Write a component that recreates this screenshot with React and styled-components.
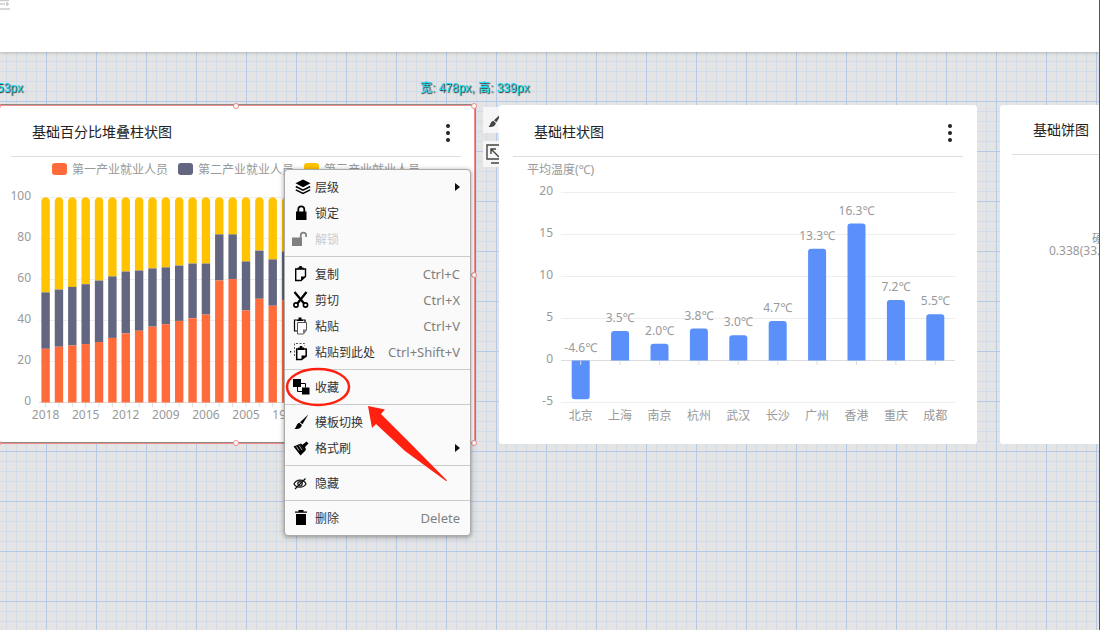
import React from 'react';
import styled, { createGlobalStyle } from 'styled-components';

const GlobalStyle = createGlobalStyle`
    * {
        box-sizing: border-box;
    }
    body {
        margin: 0;
        font-family: 'Noto Sans', 'Noto Sans CJK SC', sans-serif;
        font-size: 12px;
        color: #333333;
    }
    button {
        font-family: inherit;
    }
`

const Page = styled.div`
    display: flex;
    flex-direction: column;
    min-height: 100vh;
    overflow: hidden;
    border-right: 1px solid #555555;
`

const TopBar = styled.header`
    height: 52px;
    background: #ffffff;
    box-shadow: 0 1px 3px rgba(0, 0, 0, 0.2);
    z-index: 1;
`

const Canvas = styled.main`
    position: relative;
    flex: 1;
    overflow: hidden;
    background-color: #e4e4e4;
    background-image:
        linear-gradient(90deg, #b4cae6 1px, transparent 1px),
        linear-gradient(#b4cae6 1px, transparent 1px),
        linear-gradient(90deg, #d2dbe9 1px, transparent 1px),
        linear-gradient(#d2dbe9 1px, transparent 1px);
    background-size: 50px 50px, 50px 50px, 10px 10px, 10px 10px;
    background-position: 46px 49px, 46px 49px, 6px 9px, 6px 9px;
`

const SizeTag = styled.span`
    position: absolute;
    top: 27px;
    left: ${props => props.$x}px;
    line-height: 18px;
    white-space: nowrap;
    font-family: 'Liberation Sans', 'Noto Sans CJK SC', sans-serif;
    color: #10dcf0;
    text-shadow: 1px 1px 1px #222222;
`

const Card = styled.section`
    position: absolute;
    top: 53px;
    left: ${props => props.$x}px;
    width: 478px;
    height: 339px;
    border-radius: 3px;
    background: #ffffff;
`

const CardHeader = styled.div`
    display: flex;
    align-items: center;
    justify-content: space-between;
    height: ${props => props.$compact ? 50 : 52}px;
    margin: 0 ${props => props.$compact ? 12 : 14}px;
    padding: ${props => props.$compact ? 0 : 2}px 3px 0 21px;
    border-bottom: 1px solid #dddddd;
`

const CardTitle = styled.h2`
    margin: 0;
    font-size: 14px;
    font-weight: 400;
    line-height: 20px;
    color: #222222;
`

const MoreButton = styled.button`
    display: flex;
    padding: 2px 0 0;
    border: 0;
    background: none;
`

const Legend = styled.div`
    display: flex;
    align-items: center;
    gap: 10px;
    height: 24px;
    padding-left: 55px;
`

const LegendItem = styled.span`
    display: flex;
    align-items: center;
    gap: 5px;
    white-space: nowrap;
    color: #999999;

    &::before {
        content: '';
        width: 15px;
        height: 12px;
        border-radius: 3px;
        background: ${props => props.$color};
    }
`

const AxisName = styled.div`
    height: 24px;
    padding-left: 28px;
    line-height: 26px;
    color: #999999;
`

const Chart = styled.svg`
    display: block;
    width: 100%;

    text {
        font-size: 12px;
        fill: #999999;
    }
`

const PieLabel = styled.p`
    margin: 78px 0 0 49px;
    line-height: 12px;
    text-indent: 43px;
    color: #999999;
`

const Selection = styled.div`
    position: absolute;
    inset: 0;
    border: 1px solid #f58a86;
    box-shadow: 1px -1px 0 #8a8a8a, inset 0 -1px 0 #8a8a8a;
`

const Handle = styled.i`
    position: absolute;
    left: ${props => props.$x};
    top: ${props => props.$y};
    width: 6px;
    height: 6px;
    margin: -3px;
    border: 1px solid #f58a86;
    border-radius: 50%;
    background: #ffffff;
`

const SideTools = styled.div`
    position: absolute;
    top: 55px;
    left: 483px;
    display: flex;
    flex-direction: column;
    gap: 8px;
`

const SideButton = styled.button`
    display: flex;
    width: 26px;
    height: 26px;
    padding: 3px;
    border: 0;
    background: #f6f6f6;
`

const Menu = styled.div`
    position: absolute;
    top: 117px;
    left: 284px;
    width: 187px;
    border: 1px solid #aaaaaa;
    border-radius: 4px;
    background: #fafafa;
    box-shadow: 0 1px 5px rgba(0, 0, 0, 0.4);
`

const MenuGroup = styled.div`
    padding: 4px 0;

    & + & {
        border-top: 1px solid #cccccc;
    }
`

const MenuItem = styled.button`
    display: flex;
    align-items: center;
    width: 100%;
    height: 26px;
    padding: 0 10px 0 7px;
    border: 0;
    background: none;
    font-size: 12px;
    color: #333333;

    &:disabled {
        color: #cccccc;
    }
`

const MenuIcon = styled.svg`
    width: 20px;
    height: 20px;
    margin-right: 3px;
    overflow: visible;
`

const Shortcut = styled.span`
    margin-left: auto;
    font-size: 13px;
    color: #808080;
`

const Arrow = styled.span`
    margin-left: auto;
    border: 4px solid transparent;
    border-left: 5px solid #111111;
    border-right: 0;
`

const Annotation = styled.svg`
    position: absolute;
    top: 310px;
    left: 284px;
    pointer-events: none;
`

const icons = {
    layers: (
        <>
            <path d="M11 2.500l7.500 3.800L11 10.200 3.500 6.300z" />
            <path d="M3.800 9.500l7.200 3.600 7.200-3.600M3.800 12.800l7.200 3.600 7.200-3.600" fill="none" stroke="#000" strokeWidth="1.500" />
        </>
    ),
    lock: (
        <>
            <path d="M4 8.500h10.500V17H4z" />
            <path d="M6.300 9V6.300a3 3 0 0 1 6 0V9" fill="none" stroke="#000" strokeWidth="1.800" />
        </>
    ),
    unlock: (
        <g fill="#808080">
            <path d="M0 8.500h10V17H0z" />
            <path d="M8.700 9V6.300a2.700 2.700 0 0 1 5.400 0V8" fill="none" stroke="#808080" strokeWidth="1.700" />
        </g>
    ),
    copy: (
        <>
            <path d="M6 5H3.700v11.500H9l4.500-4V5H11" fill="none" stroke="#000" strokeWidth="1.400" />
            <path d="M5.500 3.500h1.800V2h2.500v1.500h1.800v2.200H5.500zM9 17v-4.500h5z" />
        </>
    ),
    cut: (
        <g fill="none" stroke="#000">
            <path d="M2.500 2L12.500 14M14.500 2L5 14" strokeWidth="2.300" />
            <circle cx="4" cy="15" r="2.100" strokeWidth="1.600" />
            <circle cx="13.500" cy="15" r="2.100" strokeWidth="1.600" />
        </g>
    ),
    paste: (
        <>
            <path d="M5 15H2.500V4H5M10.500 4H13v2" fill="none" stroke="#000" strokeWidth="1.200" />
            <path d="M5 3.500h1.500V1.500h3v2H11V5H5z" />
            <path d="M5.500 6.500h9v7.500L11.500 18H5.500z" fill="#fff" stroke="#555" />
            <path d="M11 18v-4.500h3.500z" fill="#777" />
        </>
    ),
    pasteHere: (
        <>
            <path d="M2.500 14V1.500h10V4" fill="none" stroke="#555" strokeDasharray="2 1.500" />
            <path d="M-2 9h1.200v1.500H-2z" />
            <path d="M6.500 7H4.700v10.500H9.500l4.700-3.500V7H12" fill="none" stroke="#000" strokeWidth="1.500" />
            <path d="M6 5.500h1.800V4h2.500v1.500h1.800V8H6zM9.500 18v-4.500h5z" />
        </>
    ),
    favorite: (
        <>
            <path d="M1 2h8v8H1zM10 10.500h7.500V17.500H10z" />
            <path d="M9 6.500h4.500v4M5.500 10v4.500H10" fill="none" stroke="#000" />
        </>
    ),
    brush: (
        <>
            <path d="M16.300 2.500L10.500 12.300 8 10.200z" />
            <path d="M7.300 10.800l2.600 2.300c-.5 3.200-4.200 4.600-7.400 3.600 2-.8 1.500-4.800 4.800-5.900z" />
        </>
    ),
    format: (
        <>
            <path d="M1.500 8.500L7.500 6l6 6.500L8.500 17.500z" />
            <path d="M8.500 5.200l2 1.600 4-3.400 2 2.200-3.500 3.400 1 2.600-1 .8-5-6z" />
            <path d="M4.500 8.500l2.500 4M7 7.500l3 4.500" stroke="#fafafa" strokeWidth=".7" />
        </>
    ),
    hide: (
        <g fill="none" stroke="#111" strokeWidth="1.200">
            <path d="M2 11c2-5 10-5.500 12 0-2.500 4.200-10 4.200-12 0z" />
            <circle cx="8" cy="10.800" r="2.200" />
            <path d="M3 16L13.500 5.500" />
        </g>
    ),
    trash: <path d="M4 6h10v11H4zM3 3.500h3.500V2h5v1.500H15v1.300H3z" />,
};

const menu = [
    [
        { label: '层级', icon: 'layers', sub: true },
        { label: '锁定', icon: 'lock' },
        { label: '解锁', icon: 'unlock', disabled: true },
    ],
    [
        { label: '复制', icon: 'copy', keys: 'Ctrl+C' },
        { label: '剪切', icon: 'cut', keys: 'Ctrl+X' },
        { label: '粘贴', icon: 'paste', keys: 'Ctrl+V' },
        { label: '粘贴到此处', icon: 'pasteHere', keys: 'Ctrl+Shift+V' },
    ],
    [{ label: '收藏', icon: 'favorite' }],
    [
        { label: '模板切换', icon: 'brush' },
        { label: '格式刷', icon: 'format', sub: true },
    ],
    [{ label: '隐藏', icon: 'hide' }],
    [{ label: '删除', icon: 'trash', keys: 'Delete' }],
];

// [first industry, first + second industry], the third fills up to 100
const shares = [
    [26.2, 53.7], [27.2, 55.1], [27.8, 56.4], [28.5, 57.7], [29.5, 59.5],
    [31.5, 61.5], [33.7, 63.9], [35, 64.4], [37, 65.4], [38.2, 65.9],
    [39.8, 66.8], [41.1, 67.8], [42.9, 67.8], [59.5, 82], [60.2, 82],
    [44.9, 68.8], [50.6, 74.1], [47.2, 69.8], [49.8, 73.7],
];
const years = ['2018', '2015', '2012', '2009', '2006', '2005', '1999'];

const temps = [
    ['北京', -4.6], ['上海', 3.5], ['南京', 2.0], ['杭州', 3.8], ['武汉', 3.0],
    ['长沙', 4.7], ['广州', 13.3], ['香港', 16.3], ['重庆', 7.2], ['成都', 5.5],
];

const MoreIcon = () => (
    <MoreButton aria-label="更多">
        <svg width="20" height="20">
            <circle cx="10" cy="3" r="2" fill="#222" />
            <circle cx="10" cy="10" r="2" fill="#222" />
            <circle cx="10" cy="17" r="2" fill="#222" />
        </svg>
    </MoreButton>
)

const StackedChart = () => {
    const y = value => 221.5 - value * 2.05;
    const x = index => 48.6 + index * 13.36;
    return (
        <Chart viewBox="0 0 478 263">
            {[0, 20, 40, 60, 80, 100].map(value => (
                <g key={value}>
                    <line x1="42" x2="450" y1={Math.floor(y(value)) + 0.5} y2={Math.floor(y(value)) + 0.5} stroke={value ? '#eeeeee' : '#dddddd'} />
                    <text x="34" y={y(value) + 2} textAnchor="end">{value}</text>
                </g>
            ))}
            {shares.map(([first, second], i) => (
                <g key={i}>
                    <path d={`M${x(i) - 4.2} ${y(second)}V20.500a4.200 4.200 0 0 1 8.400 0V${y(second)}z`} fill="#ffc300" />
                    <rect x={x(i) - 4.2} y={y(second)} width="8.400" height={y(first) - y(second)} fill="#626681" />
                    <rect x={x(i) - 4.2} y={y(first)} width="8.400" height={y(0) - y(first)} fill="#ff6b3b" />
                    <line x1={x(i)} x2={x(i)} y1="222" y2="226" stroke="#dddddd" />
                </g>
            ))}
            {years.map((year, i) => (
                <text key={year} x={x(i * 3)} y="238" textAnchor="middle">{year}</text>
            ))}
        </Chart>
    );
}

const TemperatureChart = () => {
    const y = value => 179.5 - value * 8.4;
    const x = index => 81.7 + index * 39.4;
    return (
        <Chart viewBox="0 0 478 263">
            {[20, 15, 10, 5, 0, -5].map(value => (
                <g key={value}>
                    <line x1="62" x2="456" y1={y(value)} y2={y(value)} stroke={value ? '#eeeeee' : '#dddddd'} />
                    <text x="54" y={y(value) + 2} textAnchor="end">{value}</text>
                </g>
            ))}
            {temps.map(([city, value], i) => {
                const top = Math.min(y(value), y(0));
                const h = Math.abs(value) * 8.4;
                const bar = value > 0
                    ? `M${x(i) - 9} ${y(0)}V${top + 3}q0-3 3-3h12q3 0 3 3V${y(0)}z`
                    : `M${x(i) - 9} ${top}v${h - 3}q0 3 3 3h12q3 0 3-3V${top}z`;
                return (
                    <g key={city}>
                        <path d={bar} fill="#5b8ff9" />
                        <line x1={x(i)} x2={x(i)} y1="180" y2="184" stroke="#dddddd" />
                        <text x={x(i)} y={top - 9} textAnchor="middle">{value.toFixed(1)}℃</text>
                        <text x={x(i)} y="239" textAnchor="middle">{city}</text>
                    </g>
                );
            })}
        </Chart>
    );
}

const ContextMenu = () => (
    <Menu role="menu">
        {menu.map((group, i) => (
            <MenuGroup key={i}>
                {group.map(item => (
                    <MenuItem key={item.label} role="menuitem" disabled={item.disabled}>
                        <MenuIcon viewBox="0 0 20 20">{icons[item.icon]}</MenuIcon>
                        {item.label}
                        {item.keys && <Shortcut>{item.keys}</Shortcut>}
                        {item.sub && <Arrow />}
                    </MenuItem>
                ))}
            </MenuGroup>
        ))}
    </Menu>
)

const handles = [
    ['0%', '0%'], ['50%', '0%'], ['100%', '0%'], ['100%', '50%'],
    ['100%', '100%'], ['50%', '100%'], ['0%', '100%'],
];

const App = () => (
    <Page>
        <GlobalStyle />
        <TopBar>
            <svg width="11" height="11" display="block">
                <path d="M0 .5h9M0 4h5M6 4h3M0 9h10M7 2v4" stroke="#cccccc" strokeWidth="1.600" />
            </svg>
        </TopBar>
        <Canvas>
            <SizeTag $x={-3}>53px</SizeTag>
            <SizeTag $x={420}>宽: 478px, 高: 339px</SizeTag>
            <SideTools>
                <SideButton aria-label="样式">
                    <svg width="20" height="20" viewBox="0 0 20 20" fill="#444">{icons.brush}</svg>
                </SideButton>
                <SideButton aria-label="缩放">
                    <svg width="22" height="20" fill="none" stroke="#444" strokeWidth="1.400">
                        <path d="M13 1H1v14h13M5 19h14M5 5l8 8M5 10V5h5" />
                    </svg>
                </SideButton>
            </SideTools>
            <Card $x={-3}>
                <CardHeader>
                    <CardTitle>基础百分比堆叠柱状图</CardTitle>
                    <MoreIcon />
                </CardHeader>
                <Legend>
                    <LegendItem $color="#ff6b3b">第一产业就业人员</LegendItem>
                    <LegendItem $color="#626681">第二产业就业人员</LegendItem>
                    <LegendItem $color="#ffc300">第三产业就业人员</LegendItem>
                </Legend>
                <StackedChart />
                <Selection>
                    {handles.map(([x, y]) => <Handle key={x + y} $x={x} $y={y} />)}
                </Selection>
            </Card>
            <Card $x={499}>
                <CardHeader>
                    <CardTitle>基础柱状图</CardTitle>
                    <MoreIcon />
                </CardHeader>
                <AxisName>平均温度(℃)</AxisName>
                <TemperatureChart />
            </Card>
            <Card $x={1000}>
                <CardHeader $compact>
                    <CardTitle>基础饼图</CardTitle>
                </CardHeader>
                <PieLabel>硬件<br />0.338(33.8%)</PieLabel>
            </Card>
            <ContextMenu />
            <Annotation width="170" height="130">
                <ellipse cx="34" cy="25" rx="31" ry="18" fill="none" stroke="#ff2010" strokeWidth="2.500" />
                <path d="M84 44l17 3.500-4 4.500 33 33 33 33.500-1 .5-41-30-29-27-4 4z" fill="#ff2010" />
            </Annotation>
        </Canvas>
    </Page>
)

export default App;
